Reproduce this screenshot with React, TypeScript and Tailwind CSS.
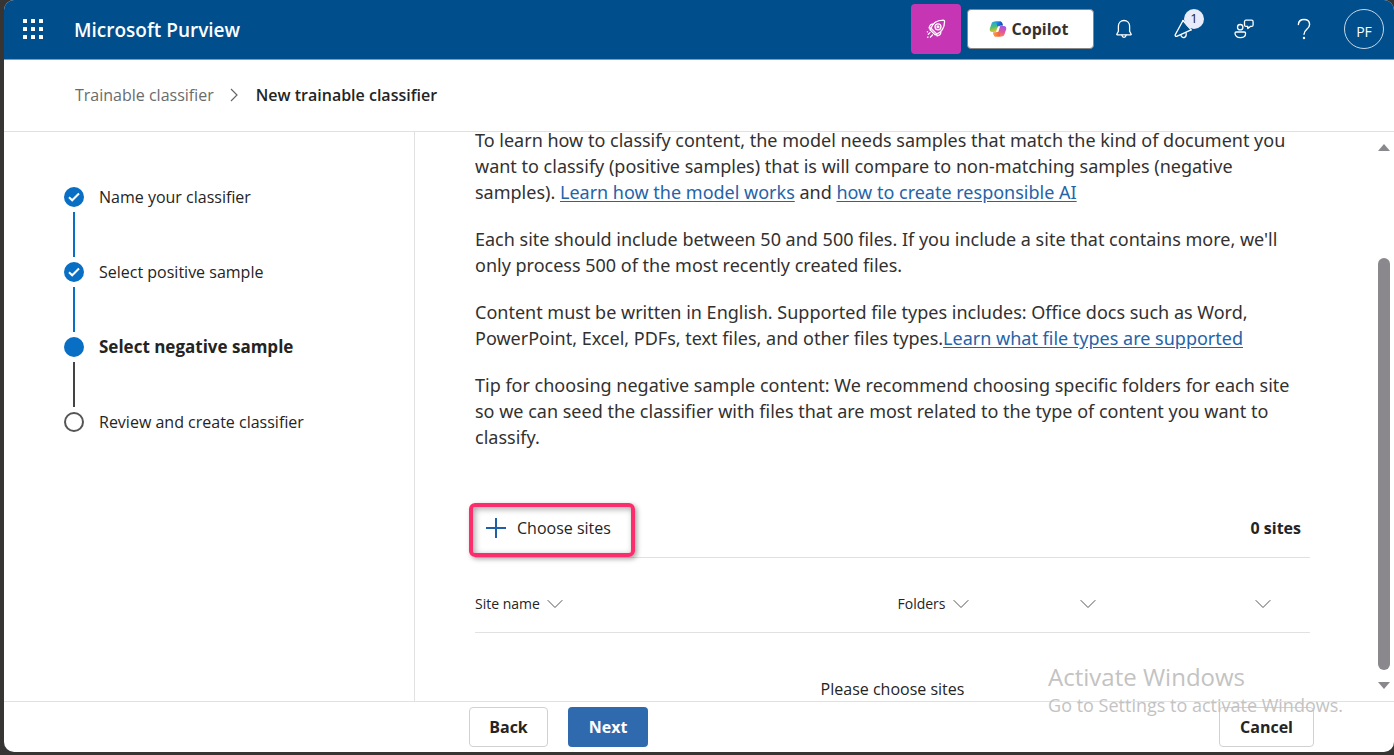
import React from "react";

type StepState = "done" | "current" | "upcoming";

const steps: { label: string; state: StepState }[] = [
  { label: "Name your classifier", state: "done" },
  { label: "Select positive sample", state: "done" },
  { label: "Select negative sample", state: "current" },
  { label: "Review and create classifier", state: "upcoming" },
];

function WaffleIcon() {
  const at = [0, 8, 16];
  return (
    <svg width="20" height="20" viewBox="0 0 20 20" fill="currentColor" aria-hidden="true">
      {at.map((y) => at.map((x) => <rect key={`${x}-${y}`} x={x} y={y} width="4" height="4" rx="0.6" />))}
    </svg>
  );
}

function RocketIcon() {
  return (
    <svg width="20" height="20" viewBox="0 0 20 20" fill="none" stroke="currentColor" strokeWidth="1.3" strokeLinecap="round" strokeLinejoin="round" aria-hidden="true">
      <path d="M5 9.200C6.500 4.400 10.600 1.400 17.200 1.200c.9 0 1.400.5 1.400 1.400C18.400 9 15.400 13.300 10.700 14.900z" />
      <circle cx="12" cy="7.800" r="3" />
      <circle cx="12" cy="7.800" r="0.900" />
      <path d="M7.200 5.200C4.900 4.700 3.600 6.500 3.100 9L5 9.200M14.800 12.700c.5 2.300-1.300 3.700-3.800 4.200l-.3-2" />
      <path d="M5 9.200l-1 1.500 5.200 5.200 1.500-1" />
      <path d="M4 13.600l-1.700 1.700M6.500 16l-2.100 2.100M1.600 18.400l.4-.4M1.300 12.900l.2-.2" />
    </svg>
  );
}

function CopilotIcon() {
  return (
    <svg width="18" height="18" viewBox="0 0 18 18" aria-hidden="true">
      <defs>
        <linearGradient id="cpTop" x1="0" y1="0" x2="1" y2="0.4">
          <stop offset="0" stopColor="#1fb6e8" />
          <stop offset="0.55" stopColor="#1a6fe0" />
          <stop offset="1" stopColor="#173fb5" />
        </linearGradient>
        <linearGradient id="cpLeft" x1="0" y1="0" x2="0.3" y2="1">
          <stop offset="0" stopColor="#1f9df0" />
          <stop offset="0.55" stopColor="#4bbf7a" />
          <stop offset="1" stopColor="#f2c318" />
        </linearGradient>
        <linearGradient id="cpRight" x1="0.6" y1="0" x2="0.4" y2="1">
          <stop offset="0" stopColor="#a057e8" />
          <stop offset="0.5" stopColor="#e2569a" />
          <stop offset="1" stopColor="#f98254" />
        </linearGradient>
        <linearGradient id="cpBottom" x1="0" y1="0" x2="1" y2="0">
          <stop offset="0" stopColor="#fba33a" />
          <stop offset="1" stopColor="#f0503f" />
        </linearGradient>
      </defs>
      <path d="M5.600 1.500h5.500c1 0 1.800.6 2.100 1.600l.7 2.400h-2.300c-1 0-1.800.6-2.100 1.600L8 12H3.200C1.300 12 .3 10.500.8 8.700l1.700-5C3 2.200 4.100 1.500 5.600 1.500z" fill="url(#cpLeft)" />
      <path d="M5.600 1.500h5.500c1 0 1.800.6 2.100 1.600l.7 2.400h-2.300c-1 0-1.800.6-2.100 1.600L9 8.700 7.300 3.300C7 2.200 6.500 1.500 5.600 1.500z" fill="url(#cpTop)" />
      <path d="M12.400 16.500H6.900c-1 0-1.800-.6-2.100-1.600L4.100 12.500h2.300c1 0 1.800-.6 2.100-1.600L10 6h4.800c1.900 0 2.900 1.500 2.400 3.300l-1.700 5c-.5 1.500-1.600 2.200-3.100 2.200z" fill="url(#cpRight)" />
      <path d="M12.400 16.500H6.900c-1 0-1.800-.6-2.100-1.600L4.100 12.500h2.300c1 0 1.800-.6 2.100-1.600l.6-1.800 1.600 5.600c.3 1.100.8 1.800 1.700 1.800z" fill="url(#cpBottom)" />
      <path d="M8.900 6.200h2.300L9.200 12H6.900z" fill="white" />
    </svg>
  );
}

function BellIcon() {
  return (
    <svg width="20" height="20" viewBox="0 0 20 20" fill="none" stroke="currentColor" strokeWidth="1.3" strokeLinejoin="round" strokeLinecap="round" aria-hidden="true">
      <path d="M10 1.500c-3.300 0-5.600 2.500-5.600 5.600v5.100l-1.600 3.100c-.1.300.1.600.4.600h13.600c.3 0 .5-.3.400-.6l-1.600-3.100V7.100c0-3.100-2.300-5.600-5.600-5.600z" />
      <path d="M7.900 16.200c.2 1.300 1 2.100 2.100 2.100s1.900-.8 2.100-2.100" />
    </svg>
  );
}

function MegaphoneIcon() {
  return (
    <svg width="20" height="20" viewBox="0 0 20 20" fill="none" stroke="currentColor" strokeWidth="1.3" strokeLinejoin="round" strokeLinecap="round" aria-hidden="true">
      <path d="M9 1.500L1.300 15.600c-.5 1 .3 2.100 1.400 1.800l14.400-6.500" />
      <path d="M9 1.500l8.100 9.400" />
      <path d="M6.900 16c.3 1.800 1.700 2.900 3.300 2.500 1.500-.4 2.300-2 1.900-4.500" />
    </svg>
  );
}

function FeedbackIcon() {
  return (
    <svg width="20" height="20" viewBox="0 0 20 20" fill="none" stroke="currentColor" strokeWidth="1.3" strokeLinejoin="round" aria-hidden="true">
      <circle cx="6.200" cy="8.200" r="2.700" />
      <path d="M2.300 13h8c.8 0 1.300.5 1.300 1.200 0 2.900-2.300 4.500-5.300 4.500S1 17.100 1 14.200C1 13.500 1.500 13 2.300 13z" />
      <path d="M12 1.200h5.600c.9 0 1.500.6 1.500 1.500v3.200c0 .9-.6 1.500-1.500 1.500h-1.200l-2.600 2.200V7.400H12c-.9 0-1.500-.6-1.500-1.500V2.700c0-.9.600-1.500 1.500-1.500z" />
    </svg>
  );
}

function HelpIcon() {
  return (
    <svg width="16" height="22" viewBox="0 0 16 22" fill="none" stroke="currentColor" strokeWidth="1.400" strokeLinecap="round" aria-hidden="true">
      <path d="M2.400 6.600C2.400 3.500 4.700 1.500 8 1.500s5.600 2 5.600 5c0 2.300-1.300 3.500-2.800 4.800C9.200 12.700 8 13.800 8 16.200" />
      <circle cx="8" cy="20" r="0.500" fill="currentColor" />
    </svg>
  );
}

function ChevronDown() {
  return (
    <svg width="16" height="10" viewBox="0 0 16 10" fill="none" stroke="#555555" strokeWidth="1" aria-hidden="true">
      <path d="M0.700 1.200L8 8.500l7.300-7.300" />
    </svg>
  );
}

function StepMarker({ state }: { state: StepState }) {
  if (state === "done") {
    return (
      <span className="flex size-5 items-center justify-center rounded-full bg-[#086fc4]">
        <svg width="12" height="12" viewBox="0 0 12 12" fill="none" stroke="white" strokeWidth="2" aria-hidden="true">
          <path d="M1 6.300l3.200 3L11 2.500" />
        </svg>
      </span>
    );
  }
  if (state === "current") return <span className="size-5 rounded-full bg-[#086fc4]" />;
  return <span className="size-5 rounded-full border-2 border-[#555555]" />;
}

function Header() {
  return (
    <header className="flex h-15 shrink-0 items-center border-b border-[#6ea3d0] bg-[#004e8c] pb-px text-white">
      <button type="button" aria-label="App launcher" className="ml-[19px] mr-[31px] flex">
        <WaffleIcon />
      </button>
      <span className="pt-[2px] text-[19px] font-semibold">Microsoft Purview</span>
      <div className="ml-auto flex items-center">
        <button type="button" aria-label="Try the new portal" className="flex h-[50px] w-[50px] items-center justify-center rounded bg-[#c636b4]">
          <RocketIcon />
        </button>
        <button type="button" className="ml-[6px] flex h-10 w-[127px] items-center justify-center gap-[5px] rounded border border-[#8a8886] bg-white pr-1 text-[16px] font-bold text-[#323130]">
          <CopilotIcon />
          Copilot
        </button>
        <div className="flex items-center">
          <button type="button" aria-label="Notifications" className="flex h-10 w-15 items-center justify-center">
            <BellIcon />
          </button>
          <button type="button" aria-label="Announcements, 1 new" className="relative flex h-10 w-15 items-center justify-center">
            <MegaphoneIcon />
            <span className="absolute top-0 right-[10px] flex size-5 items-center justify-center rounded-full bg-[#e8ebfa] text-[13px] text-[#242424]">1</span>
          </button>
          <button type="button" aria-label="Feedback" className="flex h-10 w-15 items-center justify-center">
            <FeedbackIcon />
          </button>
          <button type="button" aria-label="Help" className="flex h-10 w-15 items-center justify-center">
            <HelpIcon />
          </button>
        </div>
        <button type="button" aria-label="Account" className="ml-[10px] mr-[10px] flex size-10 items-center justify-center rounded-full border border-[#c5d8e8] pt-1 text-[14px]">
          PF
        </button>
      </div>
    </header>
  );
}

function Steps() {
  return (
    <nav aria-label="Progress" className="w-[411px] shrink-0 border-r border-[#e1e1e1] pl-15 pt-[55px]">
      <ol>
        {steps.map((step, i) => (
          <li key={step.label} className="flex gap-[15px]">
            <div className="flex flex-col items-center">
              <StepMarker state={step.state} />
              {i < steps.length - 1 && (
                <span className={`my-[5px] h-[45px] w-[2px] ${step.state === "done" ? "bg-[#086fc4]" : "bg-[#444444]"}`} />
              )}
            </div>
            <span className={`leading-5 text-[#242424] ${step.state === "current" ? "text-[17px] font-bold" : "text-[16px]"}`}>{step.label}</span>
          </li>
        ))}
      </ol>
    </nav>
  );
}

function TextLink({ children }: { children: React.ReactNode }) {
  return (
    <a href="#" className="text-[#2563a8] underline underline-offset-2">
      {children}
    </a>
  );
}

function HeadCell({ label, width, name }: { label?: string; width: string; name: string }) {
  return (
    <th scope="col" className={`${width} h-14 p-0 text-left font-normal`}>
      <button type="button" aria-label={`Sort by ${name}`} className="flex items-center gap-[7px] text-[14px]">
        {label}
        <ChevronDown />
      </button>
    </th>
  );
}

function Content() {
  return (
    <main className="min-w-0 flex-1 overflow-hidden pl-15 pr-2">
      <div className="-mt-[5px] flex max-w-[835px] flex-col gap-[21px] font-['Noto_Sans','Open_Sans',sans-serif] text-[18px] leading-[26px] text-[#323130]">
        <p>
          To learn how to classify content, the model needs samples that match the kind of document you want to classify (positive samples) that is will compare to non-matching samples (negative samples). <TextLink>Learn how the model works</TextLink> and <TextLink>how to create responsible AI</TextLink>
        </p>
        <p>
          Each site should include between 50 and 500 files. If you include a site that contains more, we'll only process 500 of the most recently created files.
        </p>
        <p>
          Content must be written in English. Supported file types includes: Office docs such as Word, PowerPoint, Excel, PDFs, text files, and other files types.<TextLink>Learn what file types are supported</TextLink>
        </p>
        <p>
          Tip for choosing negative sample content: We recommend choosing specific folders for each site so we can seed the classifier with files that are most related to the type of content you want to classify.
        </p>
      </div>
      <div className="mt-[49px] max-w-[835px] text-[#242424]">
        <div className="flex h-[59px] items-center justify-between border-b border-[#e1e1e1] pr-[9px] text-[16px]">
          <button type="button" className="relative flex h-full items-center gap-[11px] pl-[11px] pr-[22px]">
            <svg width="20" height="20" viewBox="0 0 20 20" stroke="#1f5fa8" strokeWidth="2" aria-hidden="true">
              <path d="M10 0v20M0 10h20" />
            </svg>
            Choose sites
            <span className="absolute -left-[6px] -right-[2px] top-1 bottom-0 rounded-md border-4 border-[#fc2d6c] shadow-[2px_2px_5px_rgba(0,0,0,0.35),inset_2px_2px_6px_rgba(0,0,0,0.35)]" />
          </button>
          <span className="font-bold">0 sites</span>
        </div>
        <table className="mt-[18px] w-full table-fixed border-collapse">
          <thead>
            <tr className="border-b border-[#e1e1e1]">
              <HeadCell label="Site name" name="site name" width="w-[50.600%]" />
              <HeadCell label="Folders" name="folders" width="w-[21.800%]" />
              <HeadCell name="third column" width="w-[21%]" />
              <HeadCell name="fourth column" width="w-[6.600%]" />
            </tr>
          </thead>
          <tbody>
            <tr>
              <td colSpan={4} className="pt-11 text-center text-[16px] leading-6">
                Please choose sites
              </td>
            </tr>
          </tbody>
        </table>
      </div>
    </main>
  );
}

function ScrollTrack() {
  return (
    <div className="flex w-5 shrink-0 flex-col items-center pb-3 pt-3" aria-hidden="true">
      <svg width="12" height="7" viewBox="0 0 12 7" fill="#8a888c">
        <path d="M6 0L12 7H0z" />
      </svg>
      <span className="mt-[107px] mb-3 w-3 flex-1 rounded-full bg-[#8a888c]" />
      <svg width="12" height="7" viewBox="0 0 12 7" fill="#8a888c">
        <path d="M6 7L12 0H0z" />
      </svg>
    </div>
  );
}

export default function App() {
  return (
    <div className="relative flex h-screen flex-col bg-[#373534] pb-[3px] pl-1 font-['Open_Sans','Noto_Sans',sans-serif]">
      <div className="flex min-h-0 flex-1 flex-col overflow-hidden rounded-[10px] bg-white">
        <Header />
        <nav aria-label="Breadcrumb" className="flex h-18 shrink-0 items-center border-b border-[#e1e1e1] pb-[2px] pl-[71px] text-[16px]">
          <a href="#" className="text-[#6b6b6b]">Trainable classifier</a>
          <svg className="ml-4 mr-[18px]" width="8" height="14" viewBox="0 0 8 14" fill="none" stroke="#666666" strokeWidth="1.200" aria-hidden="true">
            <path d="M1 1l6 6-6 6" />
          </svg>
          <span className="font-semibold text-[#242424]">New trainable classifier</span>
        </nav>
        <div className="flex min-h-0 flex-1">
          <Steps />
          <Content />
          <ScrollTrack />
        </div>
        <footer className="flex h-[51px] shrink-0 items-center gap-5 border-t border-[#e1e1e1] pl-[465px] pr-20 text-[16px] font-bold">
          <button type="button" className="h-10 w-[79px] rounded border border-[#d1d1d1] text-[#242424]">Back</button>
          <button type="button" className="h-10 w-20 rounded bg-[#2f6aae] text-white">Next</button>
          <button type="button" className="ml-auto h-10 w-[95px] rounded border border-[#d1d1d1] text-[#242424]">Cancel</button>
        </footer>
      </div>
      <div className="pointer-events-none absolute bottom-[38px] right-[51px] text-[#c3c3c3]">
        <p className="text-[24px] leading-8">Activate Windows</p>
        <p className="text-[18px] leading-6">Go to Settings to activate Windows.</p>
      </div>
    </div>
  );
}
